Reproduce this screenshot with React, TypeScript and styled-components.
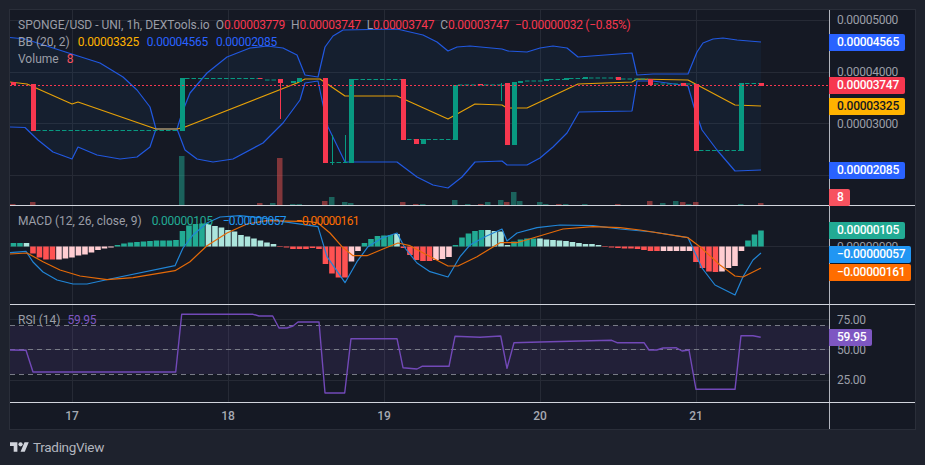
import React from "react";
import styled, { createGlobalStyle } from "styled-components";

type Pt = [number, number];
const pts = (a: Pt[]) => a.map((p) => p.join(",")).join(" ");

const C = {
  up: "#089981",
  down: "#f7374f",
  volUp: "#22ab94",
  volDown: "#ef5350",
  bb: "#2158e0",
  ma: "#e5a008",
  macd: "#2185d6",
  signal: "#e56a08",
  rsi: "#7249b8",
  grid: "#262a35",
};

const upper: Pt[] = [[10,37.5],[25,39],[78,56],[100,63],[123,77],[137,90],[150,107],[156,129],[177,129],[182,113],[190,93],[207,73],[227,57],[250,48],[267,46],[283,48],[297,55],[305,75],[318,77],[325,47],[333,36],[343,30],[397,29],[423,35],[437,42],[448,51],[457,47],[470,46],[502,49],[508,51],[527,52],[540,48],[553,46],[567,48],[578,57],[632,53],[637,75],[653,74],[688,74],[697,52],[703,43],[713,39],[723,38],[737,40],[761,42]];
const lower: Pt[] = [[10,127],[25,127.5],[38,140],[53,152],[72,159],[78,147],[97,155],[120,159],[137,157],[150,147],[156,129],[177,129],[185,150],[197,159],[213,162],[233,159],[263,143],[283,123],[300,100],[305,83],[318,81],[322,100],[328,127],[345,162],[397,162],[417,177],[433,185],[448,188],[462,177],[475,162],[502,161],[507,165],[527,165],[540,158],[553,147],[567,133],[579,112],[632,111],[637,81],[653,81],[688,86],[694,107],[702,130],[717,150],[735,171],[761,170]];
const middle: Pt[] = [[10,82],[27,84],[72,104],[78,102],[156,129],[177,129],[185,127],[297,83],[305,79],[320,79],[345,96],[397,96],[448,119],[475,104],[502,105],[507,108],[527,108],[578,84],[632,82],[637,79],[688,80],[735,105],[761,106]];

// x, width, top, bottom, up?
const candles: [number, number, number, number, number][] = [
  [11,5,82,85,0],[31,5,84,131,0],[180,5,78,131,1],[278,5,79,83,0],[291,5,81,83,1],[297,5,78,82,1],
  [323,5,78,163,0],[349,5,79,163,1],[401,5,79,140,0],[414,5,139,144,0],[421,5,139,144,1],[453,5,85,140,1],
  [478,5,84,85,0],[505,5,83,145,0],[512,5,82,145,1],[518,5,81,83,1],[544,5,79,81,1],[564,5,78,80,1],[583,5,77,79,1],
  [616,5,77,80,0],[648,5,79,85,0],[681,5,83,86,0],[694,5,84,151,0],[739,5,83,151,1],[759,5,83,86,0],
];
const wicks: [number, number, number, number][] = [
  [280.5,83,119,0],[332.5,135,165,1],[345.5,135,162,1],[501.5,83,101,1],
];
const dashes: [number, number, number, string][] = [
  [36,177,130.5,C.up],[185,258,78.5,C.up],[258,264,78.5,C.down],[265,278,80,C.up],
  [330,349,162.5,C.up],[354,401,79.5,C.up],[407,453,139.5,C.up],[458,505,85,C.up],
  [525,544,81,C.up],[549,564,79.5,C.up],[569,583,78.5,C.up],[589,616,78,C.up],[621,648,79,C.up],
  [654,681,84,C.up],[686,694,84,C.up],[699,739,150.5,C.up],[745,759,83.5,C.up],
];
// x, top, up?
const volumes: [number, number, number][] = [
  [10,204,0],[30,202,0],[179,156,1],[257,203,0],[270,203,1],[277,158,0],[290,204,1],[296.5,204,1],
  [322,201,0],[329,197,1],[342,202,1],[348,203,1],[400,202,0],[413,204,0],[420,204,1],[452,200,1],
  [465,204,1],[478,204,0],[485,202,1],[498,200,1],[504,202,0],[511,192,1],[517,201,1],[537,202,1],
  [543,204,1],[556,204,0],[563,204,1],[582,204,1],[615,204,0],[647,201,0],[660,203,1],[673,201,1],
  [680,202,0],[686,204,1],[693,202,0],[738,204,1],[758,203,0],
];

const histColors: Record<string, string> = { T: "#22ab94", L: "#ace5dc", R: "#ff5252", P: "#ffcdd2" };
const histRuns: [string, number[]][] = [
  ["T",[3.5,3.5]],["L",[3.5]],["R",[-7,-11,-13,-13]],["P",[-13,-12,-11,-9,-8,-6,-3.5,-2,-1]],
  ["T",[1.5,3,4,4.5,5,5.5,6,6,6,6.5,15.5,21,22.5,23]],["L",[22.5,20.5,19,16.5,15,11.5,10,8,6,4,2.5]],
  ["R",[-0.5,-1,-2.5,-2.5,-2.5]],
  ["R",[-1.5,-2.5,-17.5,-27,-31,-31]],["P",[-15,-4.5]],["T",[3.5,7.5,10.5,11,11.5]],["L",[12.5]],
  ["R",[-1.5,-8.5,-13.5,-14.5,-14.5]],["P",[-13.5,-12.5,-10.5]],["T",[1.5,9,13,15.5,16.5]],
  ["L",[16.5,15.5,15,1.5]],["T",[5,7,8,8]],["L",[8,7,6.5,6,5.5,4.5,3.5,2.5,2.5,1.5]],["R",[-0.5,-1,-1.5]],
  ["R",[-2,-2,-2.5,-3.5,-4.5,-4.5]],["P",[-4.5,-4.5,-4.5,-4.5,-4.5]],["R",[-15.5,-21.5,-25,-25.5]],
  ["P",[-25,-21.5,-19.5,-4.5]],["T",[6,12,16]],
];
const histBars = histRuns.flatMap(([c, vals]) => vals.map((v) => ({ c: histColors[c], v })));

const macdLine: Pt[] = [[10,252.7],[26,251.3],[33,262],[43,272],[57,280],[73,284],[87,284],[110,279],[175,265.7],[183,248],[193,235],[207,223],[220,217],[240,215.7],[263,218],[283,221.7],[318,226.7],[327,256.7],[345,282.7],[357,261.7],[368,246.7],[382,238],[397,233],[405,248],[417,263],[430,271.7],[448,277],[460,256.7],[470,245],[485,236.7],[502,229],[507,241],[517,233],[537,227.7],[560,225],[593,225.7],[620,229],[653,232],[688,237.7],[702,268],[715,285],[735,295],[743,276.7],[753,260],[761,253]];
const signalLine: Pt[] = [[10,254],[27,253],[43,261.7],[60,270],[80,276],[107,279.7],[133,277.7],[175,270.7],[190,261.7],[207,245.7],[227,233],[247,224],[267,220.7],[310,221.7],[318,223],[330,233],[342,246.7],[353,255.7],[367,255.7],[383,249],[398,243],[410,245.7],[427,255],[448,266],[458,266],[477,256.7],[500,242.7],[517,242.7],[537,236.7],[563,229],[593,226.7],[620,227.7],[640,230],[688,237.7],[700,246.7],[720,265],[735,276],[743,277],[761,268]];
const rsiLine: Pt[] = [[10,350],[26,350.3],[33,372],[175.7,372],[181.7,314.3],[253,314.3],[259,316],[272.7,316],[279,328],[287,328],[293,326],[298,322],[319,322],[325,393],[344.7,393],[351,338.7],[397,338.7],[403,367.7],[417,369],[422,366.3],[449,366.3],[455,336.3],[480,337.3],[500.7,336],[507,368.3],[514,342.7],[540,342],[580,341],[611.7,340.3],[617,342.7],[644,342.7],[649,350],[656.7,350],[663,348],[676,347.7],[682,351],[689,350],[696,389.3],[735,389.3],[741,335.7],[753,335.7],[760.7,337.3]];

const gridX = [72.5, 228.5, 384.5, 540.5, 696.5];

const GlobalStyle = createGlobalStyle`
  html, body { margin: 0; padding: 0; background: #1e222d; }
  * { box-sizing: border-box; }
`;

const Page = styled.div`
  width: 925px;
  height: 465px;
  overflow: hidden;
  padding: 9px 0 0 9px;
  display: flex;
  flex-direction: column;
  background: #1e222d;
  font-family: Roboto, "Liberation Sans", sans-serif;
`;

const Frame = styled.div`
  width: 907px;
  border: 1px solid #2a2e39;
  background: #151924;
  display: flex;
  flex-direction: column;
`;

const Pane = styled.div<{ $h: number; $last?: boolean }>`
  height: ${(p) => p.$h}px;
  display: grid;
  grid-template-columns: 820px 85px;
  border-bottom: ${(p) => (p.$last ? "none" : "1px solid #d1d4dc")};
`;

const PlotCell = styled.div`
  position: relative;
  border-right: 1px solid #b2b5be;
  min-height: 0;
`;

const PlotSvg = styled.svg`
  display: block;
  width: 819px;
  height: 100%;
`;

const AxisCell = styled.div`
  position: relative;
`;

const Tick = styled.div<{ $y: number }>`
  position: absolute;
  left: 7px;
  top: ${(p) => p.$y - 8}px;
  height: 16px;
  line-height: 16px;
  font-size: 12px;
  letter-spacing: -0.28px;
  color: #9b9ea7;
  white-space: nowrap;
`;

const Tag = styled.div<{ $y: number; $bg: string; $fg?: string }>`
  position: absolute;
  left: -1px;
  top: ${(p) => p.$y}px;
  height: 17px;
  line-height: 17px;
  padding: 0 6px 0 8px;
  border-radius: 0 2px 2px 0;
  background: ${(p) => p.$bg};
  color: ${(p) => p.$fg ?? "#fff"};
  font-size: 12px;
  letter-spacing: -0.28px;
  font-weight: 500;
  white-space: nowrap;
`;

const Legend = styled.div`
  position: absolute;
  left: 8px;
  top: 7px;
  display: flex;
  flex-direction: column;
  font-size: 12px;
  line-height: 17px;
  color: #9b9ea7;
  pointer-events: none;
`;

const LegendRow = styled.div<{ $gap?: number }>`
  display: flex;
  gap: ${(p) => p.$gap ?? 8}px;
  white-space: nowrap;
`;

const Ohlc = styled.span`
  display: inline-flex;
`;

const Val = styled.span<{ $c: string; $tight?: boolean }>`
  color: ${(p) => p.$c};
  letter-spacing: ${(p) => (p.$tight ? "-0.7px" : "-0.28px")};
`;

const TimeAxis = styled.div`
  height: 26px;
  display: flex;
  gap: 32px;
  align-items: center;
`;

const TimeLabel = styled.div`
  width: 124px;
  text-align: center;
  font-size: 12px;
  font-weight: 500;
  color: #a6a9b2;
`;

const Footer = styled.div`
  flex: 1;
  display: flex;
  align-items: flex-start;
  gap: 4px;
  padding: 11px 0 0 1px;
`;

const LogoMark = styled.svg`
  display: block;
  width: 19px;
  height: 10px;
  margin-top: 1px;
  fill: #d1d4dc;
`;

const LogoText = styled.span`
  font-size: 13.5px;
  line-height: 13px;
  letter-spacing: -0.3px;
  color: #b2b5be;
`;

const Grid: React.FC<{ ys: number[]; y1: number; y2: number }> = ({ ys, y1, y2 }) => (
  <g stroke={C.grid} strokeWidth={1}>
    {gridX.map((x) => (
      <line key={x} x1={x} x2={x} y1={y1} y2={y2} />
    ))}
    {ys.map((y) => (
      <line key={y} x1={10} x2={829} y1={y} y2={y} />
    ))}
  </g>
);

const Line: React.FC<{ p: Pt[]; c: string; w?: number }> = ({ p, c, w = 1.2 }) => (
  <polyline points={pts(p)} fill="none" stroke={c} strokeWidth={w} strokeLinejoin="round" />
);

const PriceChart = () => (
  <PlotSvg viewBox="10 10 819 195" preserveAspectRatio="none">
    <Grid ys={[20.5, 72.5, 123.5, 175.5]} y1={10} y2={205} />
    <polygon points={pts([...upper, ...[...lower].reverse()])} fill="#2196f3" fillOpacity={0.055} />
    {volumes.map(([x, top, up]) => (
      <rect key={x} x={x} y={top} width={5.5} height={205 - top} fill={up ? C.volUp : C.volDown} fillOpacity={0.5} />
    ))}
    <Line p={upper} c={C.bb} />
    <Line p={lower} c={C.bb} />
    <Line p={middle} c={C.ma} />
    {wicks.map(([x, a, b, up]) => (
      <line key={x} x1={x} x2={x} y1={a} y2={b} stroke={up ? C.up : C.down} />
    ))}
    {dashes.map(([a, b, y, c]) => (
      <line key={a} x1={a} x2={b} y1={y} y2={y} stroke={c} strokeDasharray="4.5 2" />
    ))}
    {candles.map(([x, w, a, b, up]) => (
      <rect key={x} x={x} y={a} width={w} height={b - a} fill={up ? C.up : C.down} />
    ))}
    <line x1={10} x2={829} y1={85.5} y2={85.5} stroke={C.down} strokeDasharray="2 2" />
  </PlotSvg>
);

const MacdChart = () => (
  <PlotSvg viewBox="10 206 819 98" preserveAspectRatio="none">
    <Grid ys={[246.5]} y1={206} y2={304} />
    {histBars.map((b, i) => (
      <rect
        key={i}
        x={10.67 + 6.5 * i}
        y={b.v > 0 ? 246.5 - b.v : 246.5}
        width={5.6}
        height={Math.abs(b.v)}
        fill={b.c}
      />
    ))}
    <Line p={macdLine} c={C.macd} />
    <Line p={signalLine} c={C.signal} />
  </PlotSvg>
);

const RsiChart = () => (
  <PlotSvg viewBox="10 305 819 97" preserveAspectRatio="none">
    <Grid ys={[319.5, 349.5, 380.5]} y1={305} y2={402} />
    <rect x={10} y={325.5} width={819} height={48.5} fill="#7e57c2" fillOpacity={0.13} />
    {[325.5, 349.5, 374.5].map((y) => (
      <line key={y} x1={10} x2={829} y1={y} y2={y} stroke="#787b86" strokeDasharray="5 4" />
    ))}
    <Line p={rsiLine} c={C.rsi} w={1.4} />
  </PlotSvg>
);

export default function App() {
  const red = C.down;
  return (
    <Page>
      <GlobalStyle />
      <Frame>
        <Pane $h={196}>
          <PlotCell>
            <PriceChart />
            <Legend>
              <LegendRow $gap={6}>
                <span>SPONGE/USD - UNI, 1h, DEXTools.io</span>
                <Ohlc>O<Val $c={red}>0.00003779</Val></Ohlc>
                <Ohlc>H<Val $c={red}>0.00003747</Val></Ohlc>
                <Ohlc>L<Val $c={red}>0.00003747</Val></Ohlc>
                <Ohlc>C<Val $c={red}>0.00003747</Val></Ohlc>
                <Val $c={red}>−0.00000032 (−0.85%)</Val>
              </LegendRow>
              <LegendRow>
                <span>BB (20, 2)</span>
                <Val $c="#ffb300">0.00003325</Val>
                <Val $c="#2962ff">0.00004565</Val>
                <Val $c="#2962ff">0.00002085</Val>
              </LegendRow>
              <LegendRow>
                <span>Volume</span>
                <Val $c="#f7525f">8</Val>
              </LegendRow>
            </Legend>
          </PlotCell>
          <AxisCell>
            <Tick $y={10}>0.00005000</Tick>
            <Tick $y={62}>0.00004000</Tick>
            <Tick $y={113.5}>0.00003000</Tick>
            <Tag $y={24} $bg="#2962ff">0.00004565</Tag>
            <Tag $y={67} $bg="#f7374f">0.00003747</Tag>
            <Tag $y={88} $bg="#ffb300" $fg="#131722">0.00003325</Tag>
            <Tag $y={152} $bg="#2962ff">0.00002085</Tag>
            <Tag $y={179} $bg="#f7525f">8</Tag>
          </AxisCell>
        </Pane>
        <Pane $h={99}>
          <PlotCell>
            <MacdChart />
            <Legend>
              <LegendRow $gap={10}>
                <span>MACD (12, 26, close, 9)</span>
                <Val $c="#22ab94">0.00000105</Val>
                <Val $c="#2196f3" $tight>−0.00000057</Val>
                <Val $c="#ff6d00" $tight>−0.00000161</Val>
              </LegendRow>
            </Legend>
          </PlotCell>
          <AxisCell>
            <Tick $y={40.5}>0.00000000</Tick>
            <Tag $y={16} $bg="#22ab94">0.00000105</Tag>
            <Tag $y={40} $bg="#2196f3">−0.00000057</Tag>
            <Tag $y={57.5} $bg="#ff6d00">−0.00000161</Tag>
          </AxisCell>
        </Pane>
        <Pane $h={98}>
          <PlotCell>
            <RsiChart />
            <Legend>
              <LegendRow $gap={7}>
                <span>RSI (14)</span>
                <Val $c="#7e57c2">59.95</Val>
              </LegendRow>
            </Legend>
          </PlotCell>
          <AxisCell>
            <Tick $y={14.5}>75.00</Tick>
            <Tick $y={44.5}>50.00</Tick>
            <Tick $y={75}>25.00</Tick>
            <Tag $y={24} $bg="#7e57c2">59.95</Tag>
          </AxisCell>
        </Pane>
        <Pane $h={26} $last>
          <PlotCell>
            <TimeAxis>
              {[17, 18, 19, 20, 21].map((d) => (
                <TimeLabel key={d}>{d}</TimeLabel>
              ))}
            </TimeAxis>
          </PlotCell>
          <AxisCell />
        </Pane>
      </Frame>
      <Footer>
        <LogoMark viewBox="0 4 36 18" aria-label="TradingView logo">
          <path d="M14 22H7V11H0V4h14v18zM28 22h-8l7.5-18h8L28 22z" />
          <circle cx="20" cy="8" r="4" />
        </LogoMark>
        <LogoText>TradingView</LogoText>
      </Footer>
    </Page>
  );
}
